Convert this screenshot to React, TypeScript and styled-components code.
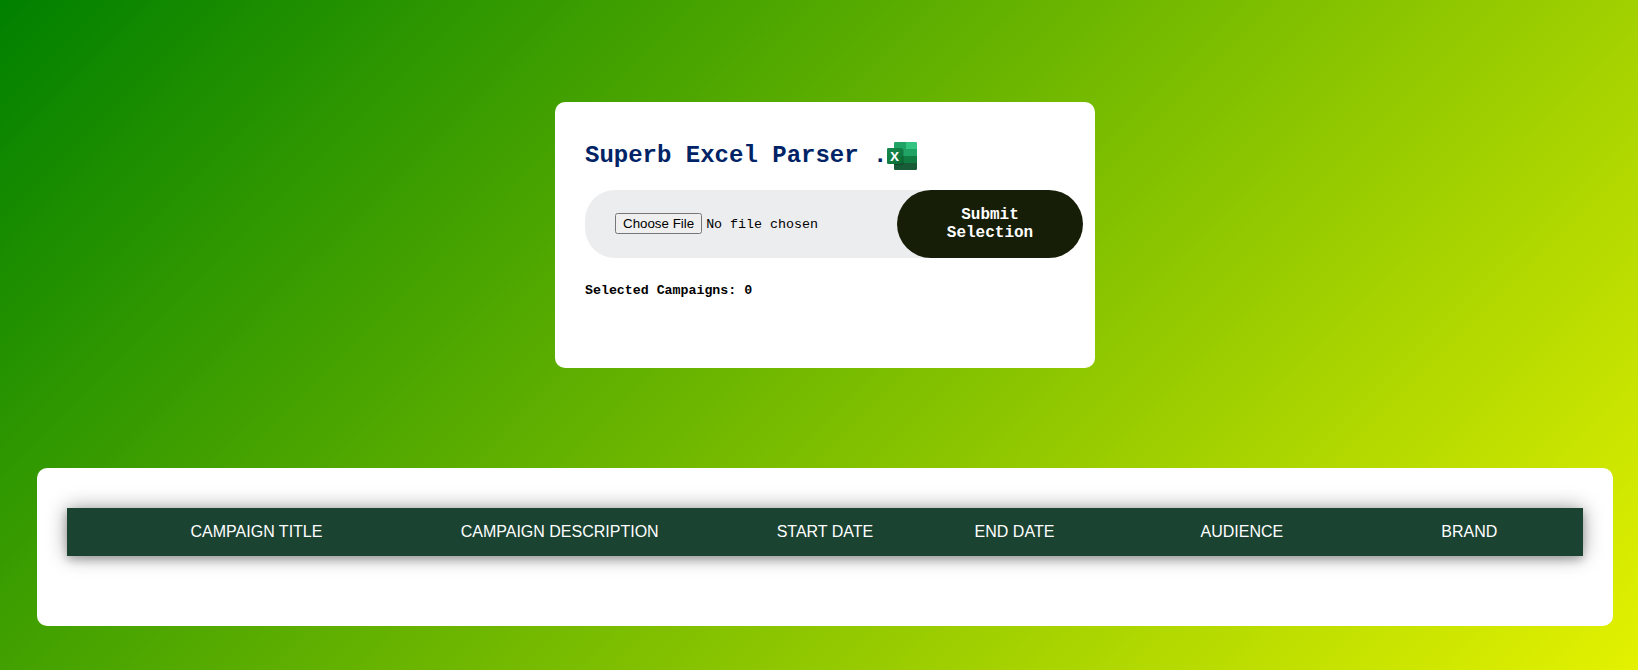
import React from "react";
import styled, { createGlobalStyle } from "styled-components";

const mono = `"Courier New", "Liberation Mono", monospace`;
const sans = `Arial, "Liberation Sans", sans-serif`;

const GlobalStyle = createGlobalStyle`
  *, *::before, *::after {
    box-sizing: border-box;
  }
  body {
    margin: 0;
    font-family: ${mono};
  }
`;

const Page = styled.main`
  display: flex;
  flex-direction: column;
  align-items: center;
  gap: 100px;
  min-height: 100vh;
  padding: 102px 25px 44px 37px;
  background: linear-gradient(135deg, green, yellow 112%);
`;

const Card = styled.section<{ $wide?: boolean }>`
  width: 100%;
  max-width: ${({ $wide }) => ($wide ? "none" : "540px")};
  padding: 40px 30px 70px;
  border-radius: 10px;
  background: #fff;
`;

const Title = styled.h1`
  display: flex;
  align-items: center;
  height: 28px;
  margin: 0 0 20px;
  color: #002366;
  font-size: 24px;
  line-height: 28px;
  white-space: nowrap;
`;

const Logo = styled.svg`
  flex: none;
  width: 30px;
  height: 28px;
`;

const UploadForm = styled.form`
  display: flex;
  align-items: stretch;
  height: 68px;
  border-radius: 30px;
  background: #ecedef;
`;

const FileField = styled.label`
  display: flex;
  flex: none;
  align-items: center;
  width: 65%;
  padding: 0 0 2px 30px;
`;

const FileInput = styled.input`
  width: 100%;
  font-family: ${mono};

  &::file-selector-button {
    font-family: ${sans};
  }
`;

const SubmitButton = styled.button`
  flex: none;
  width: 186px;
  padding: 16px 40px;
  border: 0;
  border-radius: 34px;
  background: #161e07;
  color: #fff;
  font: bold 16px/18px ${mono};
  cursor: pointer;
`;

const SelectedCount = styled.h5`
  margin: 25px 0 0;
`;

const CampaignTable = styled.table`
  width: 100%;
  table-layout: fixed;
  border-collapse: collapse;
  background: #1b4332;
  box-shadow: 0 4px 8px rgba(0, 0, 0, 0.2), 0 0 20px rgba(0, 0, 0, 0.4);
  color: #fff;
  font-family: ${sans};
`;

const HeaderCell = styled.th<{ $share: number }>`
  width: ${({ $share }) => $share}%;
  padding: 15px 0;
  font-size: 16px;
  font-weight: normal;
  line-height: 18px;
  text-align: center;
  text-transform: uppercase;
  white-space: nowrap;
`;

const SelectCell = styled.td`
  width: 5%;
  padding: 0;
`;

const columns = [
  { label: "Campaign Title", share: 15 },
  { label: "Campaign Description", share: 25 },
  { label: "Start Date", share: 10 },
  { label: "End Date", share: 15 },
  { label: "Audience", share: 15 },
  { label: "Brand", share: 15 },
];

function ExcelLogo() {
  return (
    <Logo viewBox="0 0 30 28" role="img" aria-label="Excel">
      <defs>
        <clipPath id="sheet">
          <rect x="7" width="23" height="28" rx="1.3" />
        </clipPath>
        <linearGradient id="badge" x1="0" y1="0" x2="1" y2="1">
          <stop offset="0" stopColor="#18884f" />
          <stop offset="0.5" stopColor="#117e43" />
          <stop offset="1" stopColor="#0b6631" />
        </linearGradient>
      </defs>
      <g clipPath="url(#sheet)">
        <rect x="7" width="12" height="7" fill="#21a366" />
        <rect x="19" width="11" height="7" fill="#33c481" />
        <rect x="7" y="7" width="23" height="7" fill="#21a366" />
        <rect x="7" y="14" width="23" height="7" fill="#107c41" />
        <rect x="7" y="21" width="23" height="7" fill="#185c37" />
        <rect x="7" y="7" width="9.5" height="16" rx="1.3" fill="#000" opacity="0.25" />
      </g>
      <rect y="6" width="15.5" height="16" rx="1.3" fill="url(#badge)" />
      <text
        x="7.7"
        y="18.5"
        fill="#fff"
        fontFamily="Open Sans, sans-serif"
        fontSize="13"
        fontWeight="bold"
        textAnchor="middle"
      >
        X
      </text>
    </Logo>
  );
}

export default function App() {
  return (
    <>
      <GlobalStyle />
      <Page>
        <Card>
          <Title>
            Superb Excel Parser .<ExcelLogo />
          </Title>
          <UploadForm onSubmit={(event) => event.preventDefault()}>
            <FileField>
              <FileInput type="file" accept=".xls,.xlsx" aria-label="Excel file" />
            </FileField>
            <SubmitButton type="submit">Submit Selection</SubmitButton>
          </UploadForm>
          <SelectedCount>Selected Campaigns: 0</SelectedCount>
        </Card>
        <Card $wide>
          <CampaignTable>
            <thead>
              <tr>
                <SelectCell />
                {columns.map(({ label, share }) => (
                  <HeaderCell key={label} scope="col" $share={share}>
                    {label}
                  </HeaderCell>
                ))}
              </tr>
            </thead>
          </CampaignTable>
        </Card>
      </Page>
    </>
  );
}
